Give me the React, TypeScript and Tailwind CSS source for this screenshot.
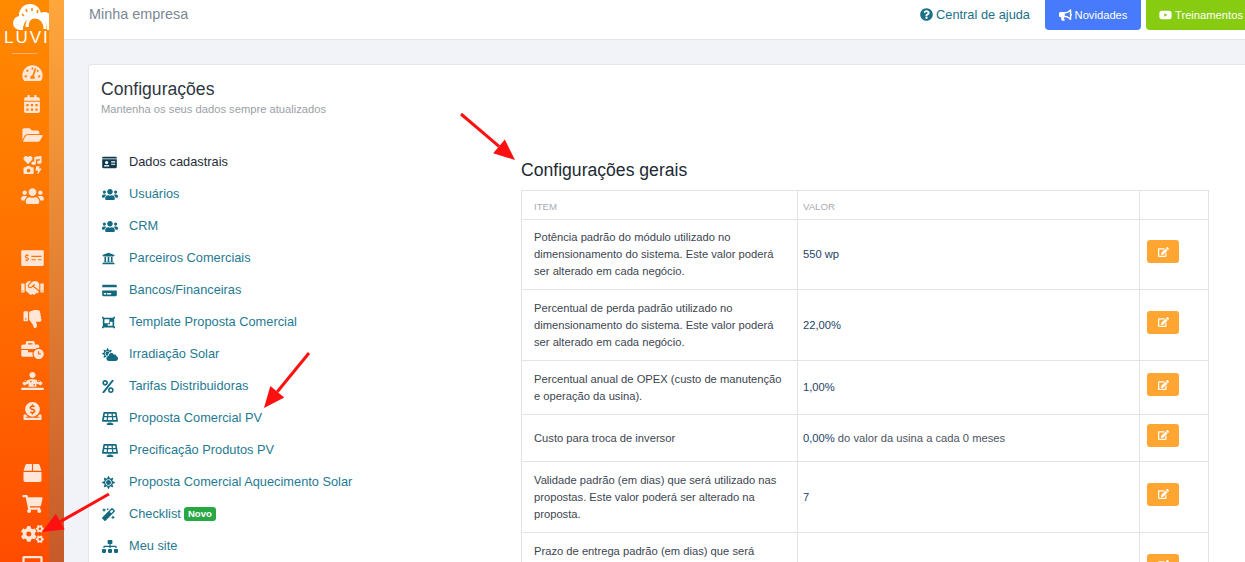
import React from "react";
import {
  FaTachometerAlt, FaCalendarAlt, FaFolderOpen, FaIcons, FaUsers, FaMoneyCheckAlt, FaHandshake, FaThumbsDown,
  FaBusinessTime, FaDiagnoses, FaDonate, FaBox, FaShoppingCart, FaCogs, FaDesktop, FaIdCard, FaUniversity,
  FaCreditCard, FaObjectGroup, FaCloudSun, FaPercent, FaSolarPanel, FaSun, FaMagic, FaSitemap,
  FaQuestionCircle, FaBullhorn, FaYoutube, FaEdit,
} from "react-icons/fa";

type IconT = React.ComponentType<{ className?: string }>;

const group1: [IconT, string][] = [
  [FaTachometerAlt, "w-[21px]"], [FaCalendarAlt, "w-[16px]"], [FaFolderOpen, "w-[21px]"], [FaIcons, "w-[19px]"], [FaUsers, "w-[23px]"],
];
const group2: [IconT, string][] = [
  [FaMoneyCheckAlt, "w-[23px]"], [FaHandshake, "w-[23px]"], [FaThumbsDown, "w-[19px]"], [FaBusinessTime, "w-[23px]"], [FaDiagnoses, "w-[23px]"], [FaDonate, "w-[19px]"],
];
const group3: [IconT, string][] = [
  [FaBox, "w-[19px]"], [FaShoppingCart, "w-[21px]"], [FaCogs, "w-[23px]"], [FaDesktop, "w-[21px]"],
];

const menu: { icon: IconT; w: string; label: string; active?: boolean; badge?: string }[] = [
  { icon: FaIdCard, w: "w-[15px]", label: "Dados cadastrais", active: true },
  { icon: FaUsers, w: "w-[16px]", label: "Usuários" },
  { icon: FaUsers, w: "w-[16px]", label: "CRM" },
  { icon: FaUniversity, w: "w-[13px]", label: "Parceiros Comerciais" },
  { icon: FaCreditCard, w: "w-[15px]", label: "Bancos/Financeiras" },
  { icon: FaObjectGroup, w: "w-[13px]", label: "Template Proposta Comercial" },
  { icon: FaCloudSun, w: "w-[16px]", label: "Irradiação Solar" },
  { icon: FaPercent, w: "w-[12px]", label: "Tarifas Distribuidoras" },
  { icon: FaSolarPanel, w: "w-[16px]", label: "Proposta Comercial PV" },
  { icon: FaSolarPanel, w: "w-[16px]", label: "Precificação Produtos PV" },
  { icon: FaSun, w: "w-[13px]", label: "Proposta Comercial Aquecimento Solar" },
  { icon: FaMagic, w: "w-[13px]", label: "Checklist", badge: "Novo" },
  { icon: FaSitemap, w: "w-[16px]", label: "Meu site" },
];

const rows: { item: string[]; value: React.ReactNode; h: string }[] = [
  { item: ["Potência padrão do módulo utilizado no", "dimensionamento do sistema. Este valor poderá", "ser alterado em cada negócio."], value: "550 wp", h: "h-[70px]" },
  { item: ["Percentual de perda padrão utilizado no", "dimensionamento do sistema. Este valor poderá", "ser alterado em cada negócio."], value: "22,00%", h: "h-[71px]" },
  { item: ["Percentual anual de OPEX (custo de manutenção", "e operação da usina)."], value: "1,00%", h: "h-[54px]" },
  { item: ["Custo para troca de inversor"], value: <><span>0,00%</span><span className="text-[#4b5563]"> do valor da usina a cada 0 meses</span></>, h: "h-[47px]" },
  { item: ["Validade padrão (em dias) que será utilizado nas", "propostas. Este valor poderá ser alterado na", "proposta."], value: "7", h: "h-[71px]" },
  { item: ["Prazo de entrega padrão (em dias) que será", "utilizado nas propostas. Este valor poderá ser", "alterado na proposta."], value: "30", h: "h-[71px]" },
];

function SideIcon({ entry }: { entry: [IconT, string] }) {
  const [Icon, w] = entry;
  return (
    <div className="flex h-[30.7px] w-[64px] shrink-0 items-center justify-center">
      <Icon className={`h-[18px] ${w} text-[#ffe6d6]`} />
    </div>
  );
}

function Arrow({ x1, y1, x2, y2 }: { x1: number; y1: number; x2: number; y2: number }) {
  const dx = x2 - x1, dy = y2 - y1;
  const len = Math.hypot(dx, dy);
  const ux = dx / len, uy = dy / len;
  const bx = x2 - ux * 21, by = y2 - uy * 21;
  const nx = -uy, ny = ux;
  const head = `${x2},${y2} ${bx + nx * 9},${by + ny * 9} ${bx - nx * 9},${by - ny * 9}`;
  return (
    <g>
      <line x1={x1} y1={y1} x2={bx} y2={by} stroke="#ff1010" strokeWidth={3} />
      <polygon points={head} fill="#ff1010" />
    </g>
  );
}

export default function App() {
  return (
    <div className="relative flex h-[562px] w-[1245px] overflow-hidden bg-[#f2f3f8] font-['Liberation_Sans',sans-serif] text-[12.8px]">
      <aside className="relative flex w-[64px] shrink-0 bg-gradient-to-b from-[#ff8a00] to-[#ff4c00]">
        <div className="absolute inset-y-0 right-0 w-[15px] bg-gradient-to-b from-[#ffa63c] to-[#c65a2a]" />
        <div className="relative z-10 flex w-[64px] flex-col">
          <div className="relative h-[58px] w-[49px] shrink-0 overflow-hidden">
            <svg className="absolute left-0 top-0" width="49" height="32" viewBox="0 0 49 32">
              <defs>
                <clipPath id="logoClip"><rect x="0" y="0" width="49" height="30" /></clipPath>
              </defs>
              <g clipPath="url(#logoClip)">
                <circle cx="20" cy="23" r="7" fill="#fff" />
                <circle cx="30" cy="15" r="11" fill="#fff" />
                <circle cx="44" cy="21" r="9" fill="#fff" />
                <rect x="20" y="18" width="29" height="12" fill="#fff" />
                <circle cx="35" cy="29" r="12" fill="#ff8a00" />
                <path d="M27 27 C27 20 31 17 35 17 C41 17 45 22 45 29" fill="none" stroke="#fff" strokeWidth="3" />
                <path d="M22 14 L24 16 M26 9 L27 12 M32 8 L32 11 M38 10 L37 13" stroke="#ff8a00" strokeWidth="1.6" />
              </g>
            </svg>
            <span className="absolute left-[4px] top-[28px] whitespace-nowrap text-[17px] leading-[20px] tracking-[2px] text-white">LUVI</span>
            <div className="absolute left-[12px] top-[53px] h-px w-[25px] bg-[#ffb070]" />
          </div>
          {group1.map((e, i) => <SideIcon key={i} entry={e} />)}
          <div className="h-[31px] shrink-0" />
          {group2.map((e, i) => <SideIcon key={i} entry={e} />)}
          <div className="h-[31px] shrink-0" />
          {group3.map((e, i) => <SideIcon key={i} entry={e} />)}
        </div>
      </aside>

      <div className="flex min-w-0 flex-1 flex-col">
        <header className="flex h-[40px] shrink-0 items-start justify-between border-b border-[#e2e3e7] bg-white pl-[25px]">
          <span className="mt-[5px] text-[14.4px] leading-[18px] text-[#7b8794]">Minha empresa</span>
          <div className="flex items-start">
            <a className="mt-[6px] mr-[15px] flex items-center gap-[3px] text-[12.8px] leading-[17px] text-[#1b7189]">
              <FaQuestionCircle className="h-[13px] w-[13px]" />Central de ajuda
            </a>
            <button className="flex h-[30px] w-[96px] items-center justify-center gap-[3px] rounded-b-[4px] bg-[#487bfb] text-[11.2px] text-white">
              <FaBullhorn className="h-[12px] w-[13px]" />Novidades
            </button>
            <button className="ml-[5px] flex h-[30px] w-[99px] items-center gap-[3px] rounded-bl-[4px] bg-[#88cc11] pl-[13px] text-[11.2px] text-white">
              <FaYoutube className="h-[12px] w-[13px]" />Treinamentos
            </button>
          </div>
        </header>

        <main className="min-h-0 flex-1 pt-[24px] pl-[24px]">
          <section className="flex h-[600px] flex-col rounded-tl-[4px] border-t border-l border-[#e6e7eb] bg-white pl-[12px]">
            <div className="pt-[13px]">
              <h1 className="text-[17.6px] leading-[22px] text-[#2f3640]">Configurações</h1>
              <p className="mt-[2px] text-[11.2px] leading-[14px] text-[#9a9fa6]">Mantenha os seus dados sempre atualizados</p>
            </div>
            <div className="mt-[30px] flex">
              <nav className="w-[420px] shrink-0">
                {menu.map((m, i) => {
                  const Icon = m.icon;
                  return (
                    <div key={i} className={`flex h-[32px] items-center ${m.active ? "text-[#1f2d38]" : "text-[#1f7a92]"}`}>
                      <span className="flex w-[28px] shrink-0 items-center pl-px">
                        <Icon className={`h-[13px] ${m.w} ${m.active ? "text-[#0f3a4d]" : "text-[#136a80]"}`} />
                      </span>
                      <span>{m.label}</span>
                      {m.badge && <span className="ml-[3px] rounded-[3px] bg-[#28a745] px-[4px] py-px text-[9.6px] font-bold leading-[12px] text-white">{m.badge}</span>}
                    </div>
                  );
                })}
              </nav>
              <div className="w-[687px] shrink-0">
                <h2 className="mt-[13px] text-[17.6px] leading-[22px] text-[#212a33]">Configurações gerais</h2>
                <table className="mt-[9px] w-[687px] table-fixed border-collapse text-[11.2px] leading-[17px] text-[#3c4650]">
                  <colgroup>
                    <col className="w-[276px]" />
                    <col className="w-[342px]" />
                    <col className="w-[69px]" />
                  </colgroup>
                  <thead>
                    <tr className="h-[29px] text-left">
                      <th className="border border-[#e3e3e3] pl-[12px] pt-[3px] text-[9.6px] font-normal uppercase text-[#a6abb0]">Item</th>
                      <th className="border border-[#e3e3e3] pl-[5px] pt-[3px] text-[9.6px] font-normal uppercase text-[#a6abb0]">Valor</th>
                      <th className="border border-[#e3e3e3]" />
                    </tr>
                  </thead>
                  <tbody>
                    {rows.map((r, i) => (
                      <tr key={i} className={r.h}>
                        <td className="border border-[#e3e3e3] pl-[12px]">
                          {r.item.map((l, j) => <div key={j} className="whitespace-nowrap">{l}</div>)}
                        </td>
                        <td className="border border-[#e3e3e3] pl-[5px] text-[#1d4468]">{r.value}</td>
                        <td className="border border-[#e3e3e3] pl-[7px]">
                          <button className="mb-[6px] flex h-[23px] w-[32px] items-center justify-center rounded-[3px] bg-[#ffa632] text-white">
                            <FaEdit className="h-[10px] w-[11px]" />
                          </button>
                        </td>
                      </tr>
                    ))}
                  </tbody>
                </table>
              </div>
            </div>
          </section>
        </main>
      </div>

      <svg className="pointer-events-none absolute inset-0 z-20" width="1245" height="562">
        <Arrow x1={461} y1={114} x2={515} y2={160} />
        <Arrow x1={309} y1={353} x2={264} y2={408} />
        <Arrow x1={109} y1={494} x2={42} y2={532} />
      </svg>
    </div>
  );
}
